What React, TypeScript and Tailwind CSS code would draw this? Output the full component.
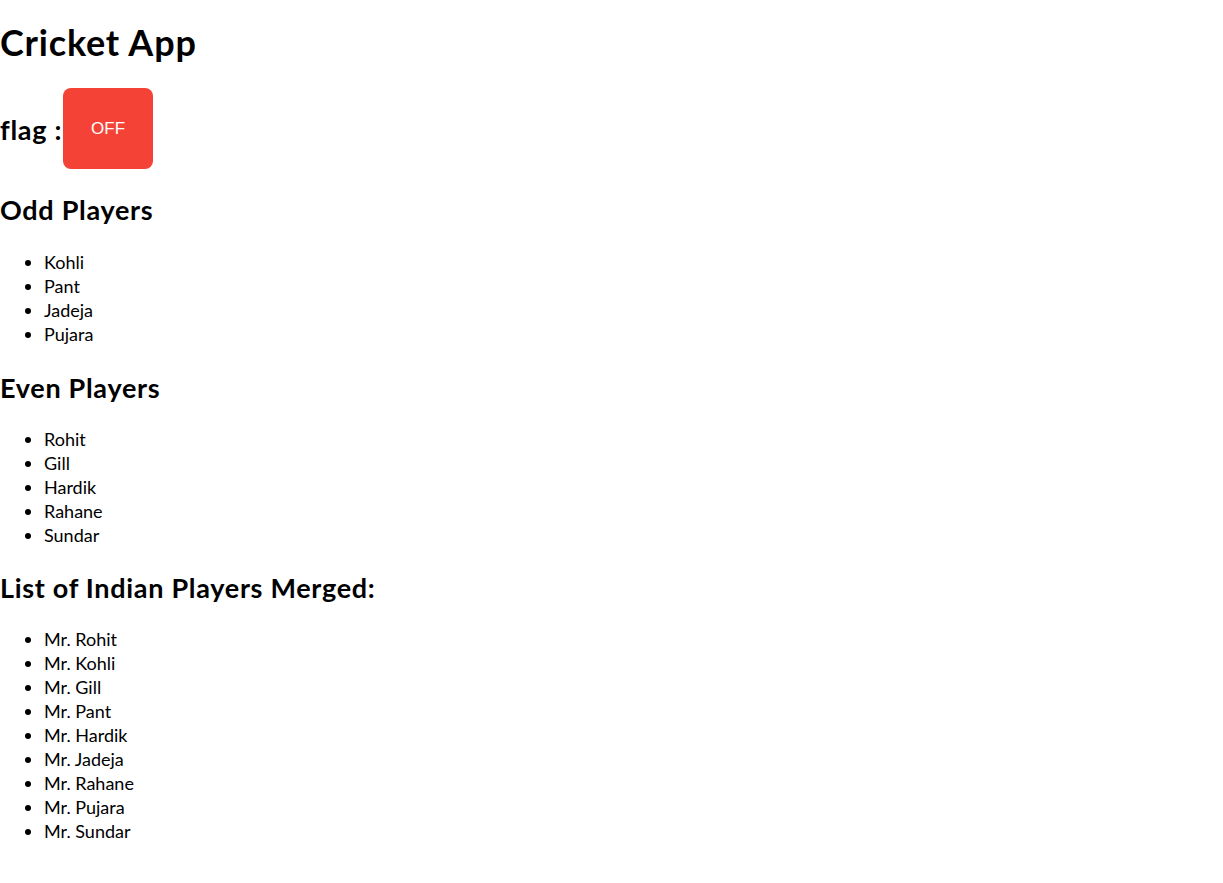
import React from "react";

const odd = ["Kohli", "Pant", "Jadeja", "Pujara"];
const even = ["Rohit", "Gill", "Hardik", "Rahane", "Sundar"];
const merged = ["Rohit", "Kohli", "Gill", "Pant", "Hardik", "Jadeja", "Rahane", "Pujara", "Sundar"];

function List({ items, className }: { items: string[]; className: string }) {
  return (
    <ul className={`list-disc pl-[44px] text-[18px] leading-[24px] ${className}`}>
      {items.map((p) => (
        <li key={p}>{p}</li>
      ))}
    </ul>
  );
}

export default function App() {
  return (
    <div
      className="min-h-[883px] bg-white text-black"
      style={{ fontFamily: "Lato, 'Noto Sans', sans-serif" }}
    >
      <h1 className="mt-[18px] text-[36px] font-bold leading-[48px] tracking-[0.8px]">Cricket App</h1>
      <div className="mt-[22px] flex h-[81px] items-center">
        <h2 className="text-[27px] font-bold leading-[36px] pt-[2px] tracking-[0.7px]">flag :</h2>
        <button
          className="ml-[1px] flex h-[81px] w-[90px] items-center justify-center rounded-[8px] bg-[#f44336] text-[17px] text-white"
          style={{ fontFamily: "'Liberation Sans', Arial, sans-serif" }}
        >
          OFF
        </button>
      </div>
      <h2 className="mt-[23px] text-[27px] font-bold leading-[36px] tracking-[0.7px]">Odd Players</h2>
      <List items={odd} className="mt-[22px]" />
      <h2 className="mt-[24px] text-[27px] font-bold leading-[36px] tracking-[0.7px]">Even Players</h2>
      <List items={even} className="mt-[21px]" />
      <h2 className="mt-[23px] text-[27px] font-bold leading-[36px] tracking-[0.7px]">List of Indian Players Merged:</h2>
      <List items={merged.map((m) => "Mr. " + m)} className="mt-[21px]" />
    </div>
  );
}
